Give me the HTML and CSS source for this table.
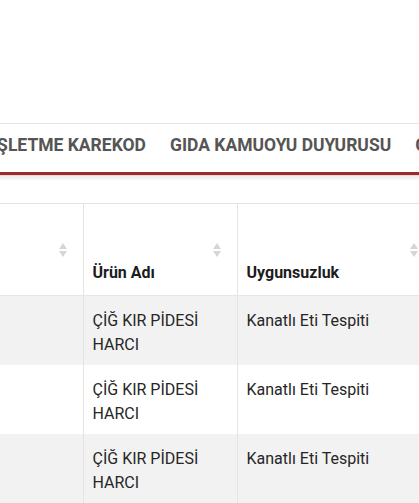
FILE: index.html
```html
<!DOCTYPE html>
<html lang="tr">
<head>
<meta charset="utf-8">
<link rel="stylesheet" href="styles.css">
</head>
<body>
<div class="top"></div>
<nav class="menu">
  <ul class="menu-list">
    <li>İŞLETME KAREKOD</li>
    <li>GIDA KAMUOYU DUYURUSU</li>
    <li>GIDA ÜRÜNLERİ</li>
  </ul>
</nav>
<div class="menu-shadow"></div>
<div class="table-wrap">
  <table class="data">
    <colgroup>
      <col class="c1">
      <col class="c2">
      <col class="c3">
    </colgroup>
    <thead>
      <tr>
        <th class="sort"></th>
        <th class="sort">Ürün Adı</th>
        <th class="sort">Uygunsuzluk</th>
      </tr>
    </thead>
    <tbody>
      <tr class="odd"><td></td><td>ÇİĞ KIR PİDESİ HARCI</td><td>Kanatlı Eti Tespiti</td></tr>
      <tr class="even"><td></td><td>ÇİĞ KIR PİDESİ HARCI</td><td>Kanatlı Eti Tespiti</td></tr>
      <tr class="odd"><td></td><td>ÇİĞ KIR PİDESİ HARCI</td><td>Kanatlı Eti Tespiti</td></tr>
    </tbody>
  </table>
</div>
</body>
</html>
```
FILE: styles.css
```css
html, body {
  margin: 0;
  padding: 0;
  background: #fff;
  overflow: hidden;
  font-family: Roboto, "Liberation Sans", Arial, sans-serif;
}

.top {
  height: 123px;
}

.menu {
  border-top: 1px solid #e4e4e4;
  border-bottom: 3px solid #9a2b2b;
  height: 48px;
  box-sizing: content-box;
  overflow: hidden;
}

.menu-list {
  list-style: none;
  margin: 0 0 0 -8px;
  padding: 0 0 6px 0;
  display: flex;
  gap: 24px;
  white-space: nowrap;
}

.menu-list li {
  font-size: 17.5px;
  font-weight: 700;
  line-height: 42px;
  color: #555;
  flex: none;
}

.menu-shadow {
  height: 6px;
  background: linear-gradient(#f4d4d2 0, #f4d4d2 1px, #ececec 1px, #f4f4f4 4px, #fff 6px);
}

.table-wrap {
  margin-top: 22px;
  width: 434px;
  overflow: hidden;
}

.data {
  width: 434px;
  table-layout: fixed;
  border-collapse: collapse;
  font-size: 16px;
  color: #222;
}

.c1 { width: 83px; }
.c2 { width: 154px; }
.c3 { width: 197px; }

.data th {
  position: relative;
  text-align: left;
  vertical-align: bottom;
  font-size: 16px;
  font-weight: 700;
  line-height: 20px;
  color: #1c1c1c;
  padding: 59px 10px 12px 9px;
  border-top: 1px solid #e2e2e2;
  border-bottom: 1px solid #e6e6e6;
  border-left: 1px solid #e4e4e4;
}

.data th:first-child,
.data td:first-child {
  border-left: none;
}

.sort::before,
.sort::after {
  content: "";
  position: absolute;
  right: 16px;
  width: 0;
  height: 0;
  border-left: 4px solid transparent;
  border-right: 4px solid transparent;
}

.sort::before {
  top: 39px;
  border-bottom: 6px solid #d6d6d6;
}

.sort::after {
  top: 47px;
  border-top: 6px solid #d6d6d6;
}

.data td {
  vertical-align: top;
  padding: 13px 10px 8px 9px;
  line-height: 24px;
  color: #262626;
  border-left: 1px solid #e4e4e4;
}

.data tr.odd td {
  background: #f2f2f2;
}

.data tr.even td {
  background: #fff;
}
```
